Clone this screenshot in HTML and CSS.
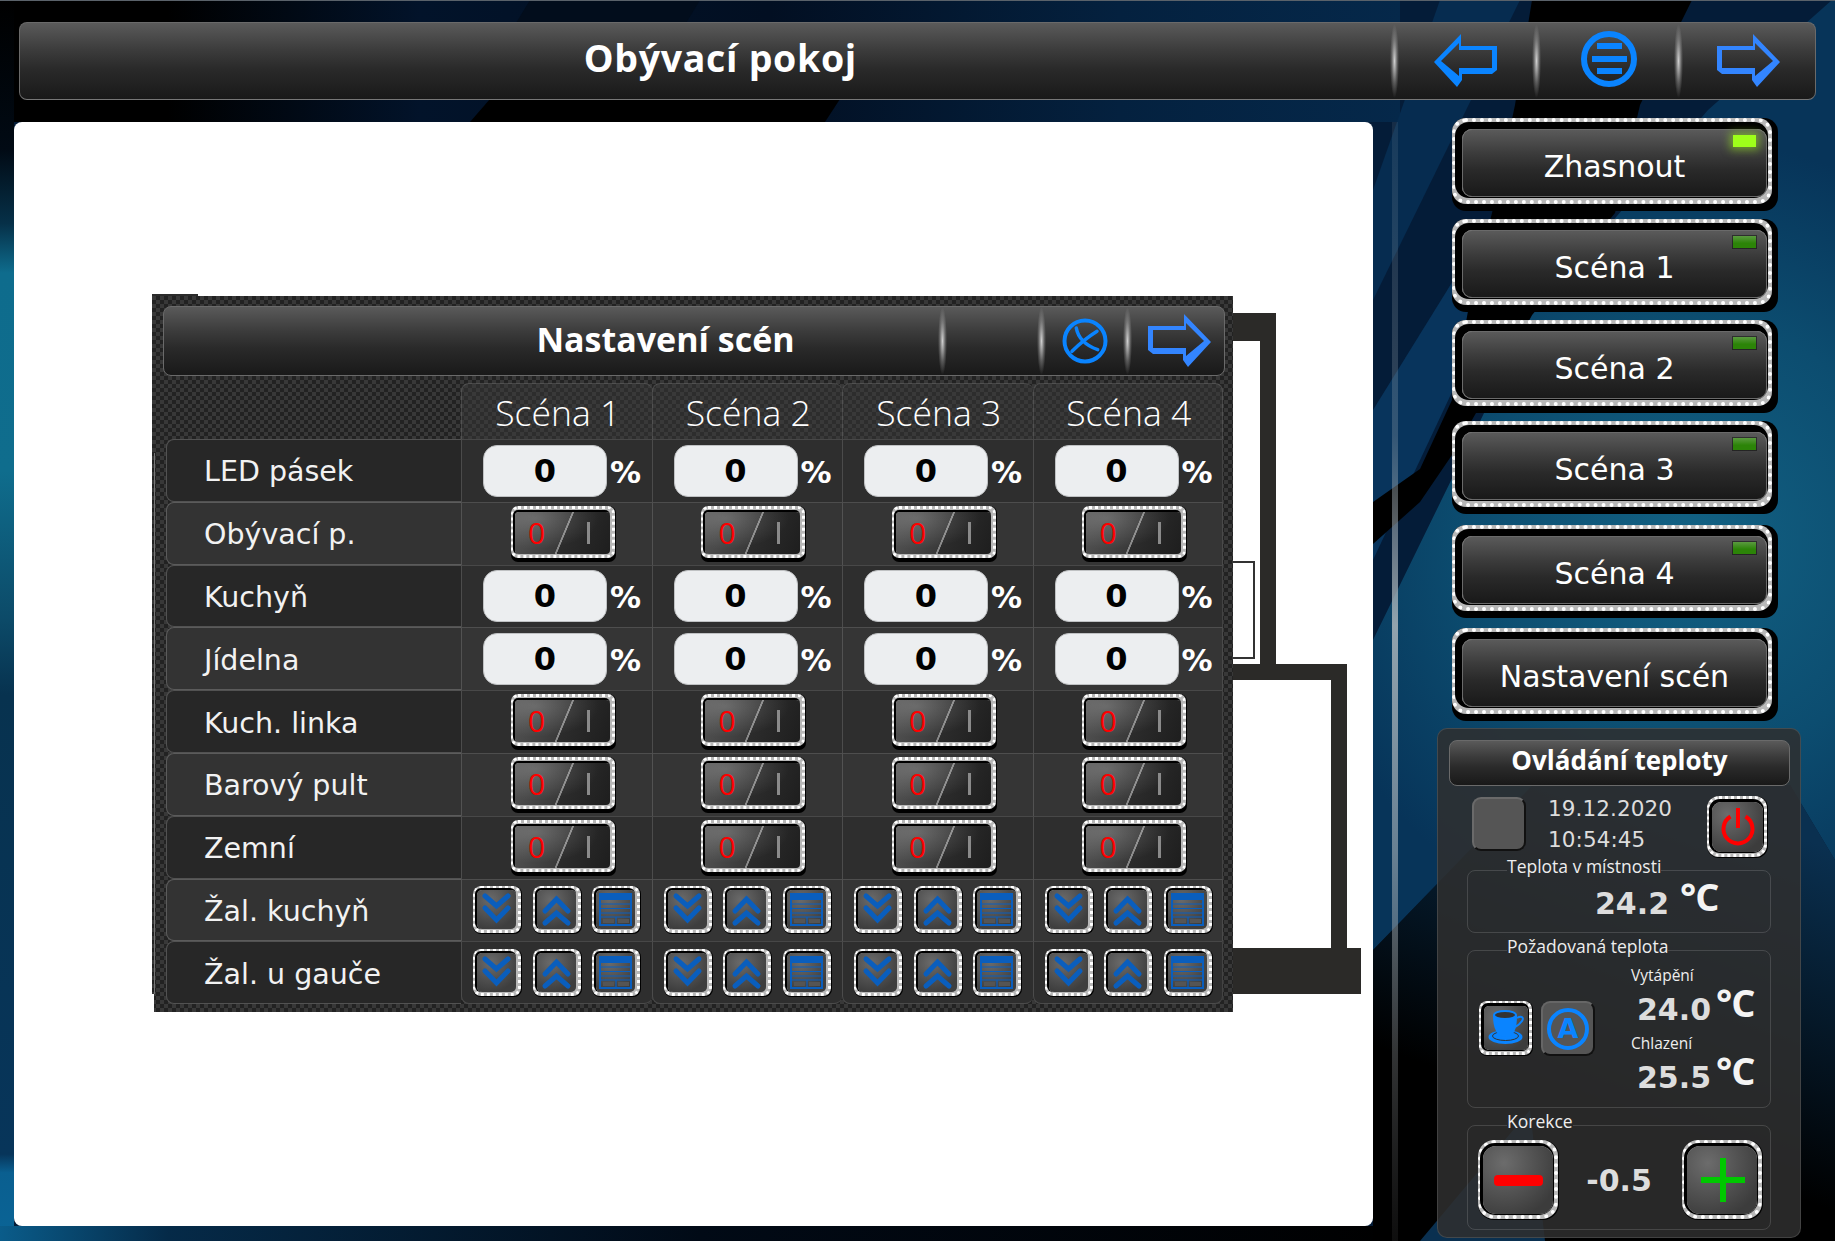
FILE: index.html
```html
<!DOCTYPE html>
<html lang="cs">
<head>
<meta charset="utf-8">
<title>Obývací pokoj</title>
<link rel="stylesheet" href="styles.css">
</head>
<body>
<svg class="bg" viewBox="0 0 1835 1241" aria-hidden="true">
  <defs>
    <linearGradient id="gTop" x1="0" y1="0" x2="1" y2="0">
      <stop offset="0" stop-color="#000"/><stop offset=".12" stop-color="#000"/><stop offset=".3" stop-color="#02132a"/><stop offset=".55" stop-color="#020f22"/><stop offset=".8" stop-color="#04213f"/><stop offset="1" stop-color="#05284a"/>
    </linearGradient>
    <linearGradient id="gLeft" x1="0" y1="0" x2="0" y2="1">
      <stop offset="0" stop-color="#000"/><stop offset=".12" stop-color="#010a14"/><stop offset=".18" stop-color="#063048"/><stop offset=".22" stop-color="#0e6c8d"/><stop offset=".38" stop-color="#0f6d8d"/><stop offset=".5" stop-color="#0c4a68"/><stop offset=".56" stop-color="#07324f"/><stop offset=".93" stop-color="#07355a"/><stop offset=".945" stop-color="#0a5f90"/><stop offset="1" stop-color="#0a6496"/>
    </linearGradient>
    <linearGradient id="gBot" x1="0" y1="0" x2="1" y2="0">
      <stop offset="0" stop-color="#0a5c8a"/><stop offset=".12" stop-color="#052a48"/><stop offset=".5" stop-color="#010a16"/><stop offset="1" stop-color="#000"/>
    </linearGradient>
    <radialGradient id="gTeal" gradientUnits="userSpaceOnUse" cx="1690" cy="540" r="400">
      <stop offset="0" stop-color="#126183"/><stop offset=".55" stop-color="#0c4d70"/><stop offset="1" stop-color="#073459"/>
    </radialGradient>
    <linearGradient id="gCorner" gradientUnits="userSpaceOnUse" x1="1835" y1="850" x2="1720" y2="1170">
      <stop offset="0" stop-color="#0a3050"/><stop offset="1" stop-color="#000"/>
    </linearGradient>
    <linearGradient id="gBeam" x1="0" y1="0" x2="0" y2="1">
      <stop offset="0" stop-color="#9aa6ae" stop-opacity=".12"/><stop offset=".28" stop-color="#9aa6ae" stop-opacity=".3"/><stop offset=".45" stop-color="#aab4ba" stop-opacity=".85"/><stop offset=".65" stop-color="#aab4ba" stop-opacity=".6"/><stop offset="1" stop-color="#777" stop-opacity=".12"/>
    </linearGradient>
  </defs>
  <rect width="1835" height="1241" fill="#041c38"/>
  <rect width="1400" height="122" fill="url(#gTop)"/>
  <polygon points="470,122 490,99 840,99 825,122" fill="#000"/>
  <polygon points="470,99 530,0 700,0 640,99" fill="#020d1c"/>
  <rect width="14" height="1241" fill="url(#gLeft)"/>
  <rect y="1226" width="1400" height="15" fill="url(#gBot)"/>
  <polygon points="1835,0 1835,860 1790,785 1533,785 1373,950 1373,640 1532,315 1708,110 1832,0" fill="url(#gTeal)"/>
  <polygon points="1440,0 1520,0 1373,300 1373,190" fill="#062c50"/>
  <polygon points="1373,410 1500,205 1540,205 1373,560" fill="#08345c"/>
  <polygon points="1532,0 1692,0 1640,105 1615,213 1532,315 1452,455 1420,502 1373,544 1373,502 1420,469 1452,400 1470,300 1492,213 1515,105" fill="#000"/>
  <polygon points="1373,950 1533,785 1790,785 1835,860 1835,1241 1373,1241" fill="url(#gCorner)"/>
  <polygon points="1420,1241 1530,1110 1545,1241" fill="#0a3050"/>
  <rect x="1392" y="122" width="6" height="1119" fill="url(#gBeam)"/>
  <rect y="0" width="1835" height="1" fill="#5a626a"/>
</svg>

<svg class="defs" aria-hidden="true">
  <symbol id="ic-arrow" viewBox="0 0 63 54"><path fill-rule="evenodd" d="M0 28 27 0v12h36v24l-5 4H28v6l-5 7zM7 27l18 15v-8h33V16H25V9z"/></symbol>
  <symbol id="ic-down" viewBox="0 0 39 39"><path d="M8 6l11.500 10L31 6M8 18l11.500 12L31 18"/></symbol>
  <symbol id="ic-up" viewBox="0 0 39 39"><path d="M8 33L19.500 23 31 33M8 21L19.500 9 31 21"/></symbol>
  <symbol id="ic-blind" viewBox="0 0 39 39"><rect class="solid" x="3" y="3" width="33" height="7"/><rect class="line" x="4" y="4" width="31" height="31"/><path class="thin" d="M5 14h29M5 18.500h29M5 23h29M4 27h31M20 27v8"/><rect class="grey" x="7" y="29" width="11" height="4"/><rect class="grey" x="22" y="29" width="11" height="4"/></symbol>
</svg>

<header class="topbar">
  <div class="title">Obývací pokoj</div>
  <span class="sep"></span>
  <div class="tool tool-a"><svg class="arrow blue-l"><use href="#ic-arrow"/></svg></div>
  <span class="sep"></span>
  <div class="tool tool-b">
    <svg class="menu" viewBox="0 0 56 56"><circle cx="28" cy="28" r="25"/><path d="M16 15h25M11 28h35M16 40h25"/></svg>
  </div>
  <span class="sep"></span>
  <div class="tool tool-c"><svg class="arrow blue-r flip"><use href="#ic-arrow"/></svg></div>
</header>

<div class="main">
  <section class="canvas">
    <svg class="plan" viewBox="14 122 1359 1104" aria-hidden="true">
      <rect x="1233" y="313" width="43" height="28"/>
      <rect x="1260" y="313" width="16" height="367"/>
      <rect x="1233" y="664" width="114" height="16"/>
      <rect x="1331" y="664" width="16" height="290"/>
      <rect x="1233" y="948" width="128" height="46"/>
      <path class="room" d="M1233 562h21v96h-21"/>
    </svg>

    <div class="dialog">
      <div class="dlg-head">
        <div class="dlg-title">Nastavení scén</div>
        <span class="sep sep-d"></span>
        <div class="dlg-gap"></div>
        <span class="sep sep-d"></span>
        <div class="dlg-x">
          <svg class="close" viewBox="0 0 46 46"><circle cx="23" cy="23" r="20.500"/><path d="M14.300 10Q17 25 35.700 31.700M35 13.300Q21.700 21.700 10 33.300"/></svg>
        </div>
        <span class="sep sep-d"></span>
        <div class="dlg-next"><svg class="arrow blue-r flip"><use href="#ic-arrow"/></svg></div>
      </div>
      <div class="sheet">
        <div class="corner"></div>
        <div class="head">Scéna 1</div><div class="head">Scéna 2</div><div class="head">Scéna 3</div><div class="head">Scéna 4</div>

        <div class="lab">LED pásek</div>
        <div class="cell"><div class="num">0</div><span class="pct">%</span></div>
        <div class="cell"><div class="num">0</div><span class="pct">%</span></div>
        <div class="cell"><div class="num">0</div><span class="pct">%</span></div>
        <div class="cell"><div class="num">0</div><span class="pct">%</span></div>

        <div class="lab">Obývací p.</div>
        <div class="cell"><div class="chrome toggle"><div class="face"><span class="off">0</span><span class="on"></span></div></div></div>
        <div class="cell"><div class="chrome toggle"><div class="face"><span class="off">0</span><span class="on"></span></div></div></div>
        <div class="cell"><div class="chrome toggle"><div class="face"><span class="off">0</span><span class="on"></span></div></div></div>
        <div class="cell"><div class="chrome toggle"><div class="face"><span class="off">0</span><span class="on"></span></div></div></div>

        <div class="lab">Kuchyň</div>
        <div class="cell"><div class="num">0</div><span class="pct">%</span></div>
        <div class="cell"><div class="num">0</div><span class="pct">%</span></div>
        <div class="cell"><div class="num">0</div><span class="pct">%</span></div>
        <div class="cell"><div class="num">0</div><span class="pct">%</span></div>

        <div class="lab">Jídelna</div>
        <div class="cell"><div class="num">0</div><span class="pct">%</span></div>
        <div class="cell"><div class="num">0</div><span class="pct">%</span></div>
        <div class="cell"><div class="num">0</div><span class="pct">%</span></div>
        <div class="cell"><div class="num">0</div><span class="pct">%</span></div>

        <div class="lab">Kuch. linka</div>
        <div class="cell"><div class="chrome toggle"><div class="face"><span class="off">0</span><span class="on"></span></div></div></div>
        <div class="cell"><div class="chrome toggle"><div class="face"><span class="off">0</span><span class="on"></span></div></div></div>
        <div class="cell"><div class="chrome toggle"><div class="face"><span class="off">0</span><span class="on"></span></div></div></div>
        <div class="cell"><div class="chrome toggle"><div class="face"><span class="off">0</span><span class="on"></span></div></div></div>

        <div class="lab">Barový pult</div>
        <div class="cell"><div class="chrome toggle"><div class="face"><span class="off">0</span><span class="on"></span></div></div></div>
        <div class="cell"><div class="chrome toggle"><div class="face"><span class="off">0</span><span class="on"></span></div></div></div>
        <div class="cell"><div class="chrome toggle"><div class="face"><span class="off">0</span><span class="on"></span></div></div></div>
        <div class="cell"><div class="chrome toggle"><div class="face"><span class="off">0</span><span class="on"></span></div></div></div>

        <div class="lab">Zemní</div>
        <div class="cell"><div class="chrome toggle"><div class="face"><span class="off">0</span><span class="on"></span></div></div></div>
        <div class="cell"><div class="chrome toggle"><div class="face"><span class="off">0</span><span class="on"></span></div></div></div>
        <div class="cell"><div class="chrome toggle"><div class="face"><span class="off">0</span><span class="on"></span></div></div></div>
        <div class="cell"><div class="chrome toggle"><div class="face"><span class="off">0</span><span class="on"></span></div></div></div>

        <div class="lab">Žal. kuchyň</div>
        <div class="cell trio"><div class="chrome mini"><div class="face"><svg><use href="#ic-down"/></svg></div></div><div class="chrome mini"><div class="face"><svg><use href="#ic-up"/></svg></div></div><div class="chrome mini"><div class="face"><svg><use href="#ic-blind"/></svg></div></div></div>
        <div class="cell trio"><div class="chrome mini"><div class="face"><svg><use href="#ic-down"/></svg></div></div><div class="chrome mini"><div class="face"><svg><use href="#ic-up"/></svg></div></div><div class="chrome mini"><div class="face"><svg><use href="#ic-blind"/></svg></div></div></div>
        <div class="cell trio"><div class="chrome mini"><div class="face"><svg><use href="#ic-down"/></svg></div></div><div class="chrome mini"><div class="face"><svg><use href="#ic-up"/></svg></div></div><div class="chrome mini"><div class="face"><svg><use href="#ic-blind"/></svg></div></div></div>
        <div class="cell trio"><div class="chrome mini"><div class="face"><svg><use href="#ic-down"/></svg></div></div><div class="chrome mini"><div class="face"><svg><use href="#ic-up"/></svg></div></div><div class="chrome mini"><div class="face"><svg><use href="#ic-blind"/></svg></div></div></div>

        <div class="lab">Žal. u gauče</div>
        <div class="cell trio"><div class="chrome mini"><div class="face"><svg><use href="#ic-down"/></svg></div></div><div class="chrome mini"><div class="face"><svg><use href="#ic-up"/></svg></div></div><div class="chrome mini"><div class="face"><svg><use href="#ic-blind"/></svg></div></div></div>
        <div class="cell trio"><div class="chrome mini"><div class="face"><svg><use href="#ic-down"/></svg></div></div><div class="chrome mini"><div class="face"><svg><use href="#ic-up"/></svg></div></div><div class="chrome mini"><div class="face"><svg><use href="#ic-blind"/></svg></div></div></div>
        <div class="cell trio"><div class="chrome mini"><div class="face"><svg><use href="#ic-down"/></svg></div></div><div class="chrome mini"><div class="face"><svg><use href="#ic-up"/></svg></div></div><div class="chrome mini"><div class="face"><svg><use href="#ic-blind"/></svg></div></div></div>
        <div class="cell trio"><div class="chrome mini"><div class="face"><svg><use href="#ic-down"/></svg></div></div><div class="chrome mini"><div class="face"><svg><use href="#ic-up"/></svg></div></div><div class="chrome mini"><div class="face"><svg><use href="#ic-blind"/></svg></div></div></div>
      </div>
    </div>
  </section>

  <aside class="side">
    <div class="chrome scene"><div class="face">Zhasnout</div><span class="led led-on"></span></div>
    <div class="chrome scene"><div class="face">Scéna 1</div><span class="led"></span></div>
    <div class="chrome scene"><div class="face">Scéna 2</div><span class="led"></span></div>
    <div class="chrome scene"><div class="face">Scéna 3</div><span class="led"></span></div>
    <div class="chrome scene scene-gap"><div class="face">Scéna 4</div><span class="led"></span></div>
    <div class="chrome scene scene-gap scene-last"><div class="face">Nastavení scén</div></div>

    <div class="temp">
      <div class="temp-title">Ovládání teploty</div>
      <div class="clock-row">
        <div class="blank"></div>
        <div class="clock"><div>19.12.2020</div><div>10:54:45</div></div>
        <div class="chrome power"><div class="face">
          <svg viewBox="0 0 38 40"><path d="M11.500 9.500a14.500 14.500 0 1 0 15 0"/><path d="M19 1v20"/></svg>
        </div></div>
      </div>
      <fieldset class="box box-room">
        <legend>Teplota v místnosti</legend>
        <div class="reading"><span class="val">24.2</span><span class="deg deg-wide">°C</span></div>
      </fieldset>
      <fieldset class="box box-set">
        <legend>Požadovaná teplota</legend>
        <div class="set-row">
          <div class="modes">
            <div class="chrome cup"><div class="face">
              <svg viewBox="0 0 44 44"><ellipse class="saucer" cx="21.500" cy="31" rx="17" ry="7"/><ellipse class="saucer-in" cx="21.500" cy="30" rx="13" ry="4.500"/><path class="body" d="M9 9c0 12 3 22 12.500 22S33 21 33 9z"/><ellipse class="rim" cx="21" cy="9" rx="11" ry="4"/><path class="handle" d="M33 12c5-3 7 0 5 3s-5 5-7 6"/></svg>
            </div></div>
            <div class="auto">
              <svg viewBox="0 0 46 46"><circle cx="23" cy="23" r="19"/><text x="23" y="32" text-anchor="middle">A</text></svg>
            </div>
          </div>
          <div class="setpoints">
            <div class="cap">Vytápění</div>
            <div class="reading r1"><span class="val">24.0</span><span class="deg">°C</span></div>
            <div class="cap cap2">Chlazení</div>
            <div class="reading r2"><span class="val">25.5</span><span class="deg">°C</span></div>
          </div>
        </div>
      </fieldset>
      <fieldset class="box box-fix">
        <legend>Korekce</legend>
        <div class="fix-row">
          <div class="chrome big"><div class="face"><span class="minus"></span></div></div>
          <div class="fix-val">-0.5</div>
          <div class="chrome big"><div class="face"><span class="plus"></span></div></div>
        </div>
      </fieldset>
    </div>
  </aside>
</div>
</body>
</html>
```
FILE: styles.css
```css
*{box-sizing:border-box}
html,body{margin:0;padding:0}
body{width:1835px;height:1241px;position:relative;overflow:hidden;background:#041c38;font-family:"DejaVu Sans",sans-serif;color:#fff}
.bg{position:absolute;left:0;top:0;z-index:-1;width:1835px;height:1241px}
.defs{position:absolute;width:0;height:0}

.topbar,.dlg-head,.temp-title,.scene .face{background:linear-gradient(#5a5a5a 0,#3c3c3c 35%,#2a2a2a 60%,#191919 100%);border:1px solid #6a6a6a}
.topbar{position:relative;display:flex;align-items:center;width:1797px;height:78px;margin:22px 0 0 19px;border-radius:8px;border-bottom-color:#777}
.title{width:1373px;padding:0 0 6px 30px;text-align:center;font:700 37.5px/1 "Open Sans",sans-serif;letter-spacing:.7px}
.sep{flex:none;width:9px;height:74px;margin:0 -1px;background:radial-gradient(ellipse closest-side,rgba(225,225,225,.9),rgba(215,215,215,.3) 60%,transparent)}
.tool{display:flex;justify-content:center;align-items:center;height:100%}
.tool-a{width:136px}
.tool-b{width:135px}
.tool-c{width:133px}
.arrow{display:block;width:63px;height:54px}
.blue-l{fill:#0a84ff}
.blue-r{fill:#3385ff}
.flip{transform:scaleX(-1)}
.menu{display:block;width:56px;height:56px;margin:0 0 4px 3px;fill:none;stroke:#0a84ff}
.menu circle{stroke-width:6}
.menu path{stroke-width:6}

.main{display:flex;align-items:flex-start;margin-top:22px}
.canvas{position:relative;flex:none;width:1359px;height:1104px;margin-left:14px;background:#fff;border-radius:8px}
.plan{position:absolute;left:0;top:0;width:1359px;height:1104px;fill:#2b2a28}
.plan .room{fill:none;stroke:#333;stroke-width:2}

.dialog{position:absolute;left:138px;top:174px;width:1081px;height:716px;padding:10px 8px 0 11px;background-color:#2b2b2b;background-image:conic-gradient(#222 25%,#383838 0 50%,#222 0 75%,#383838 0);background-size:8px 8px;clip-path:polygon(0 -2px,46px -2px,46px 0,100% 0,100% 100%,2px 100%,2px 698px,0 698px)}
.dialog::before{content:"";position:absolute;left:0;top:-2px;width:46px;height:2px;background:#2b2b2b}
.dialog::after{content:"";position:absolute;left:2px;top:157px;width:1px;height:541px;background:#777}
.dlg-head{display:flex;align-items:center;width:1062px;height:70px;border-radius:8px}
.dlg-title{width:775px;padding:0 0 4px 228px;text-align:center;font:700 34px/1 "Open Sans",sans-serif;white-space:nowrap}
.sep-d{height:68px}
.dlg-gap{width:92px}
.dlg-x{display:flex;justify-content:center;width:79px}
.close{display:block;width:46px;height:46px;fill:none;stroke:#0a84ff}
.close circle{stroke-width:4}
.close path{stroke-width:3.5;stroke-linecap:round}
.dlg-next{display:flex;justify-content:center;width:88px;padding-left:8px}

.sheet{display:grid;grid-template-columns:295px repeat(4,190.5px);grid-template-rows:56px repeat(9,62.8px);margin:7px 0 0 3px}
.head{display:flex;align-items:center;justify-content:center;padding:2px 0 0 2px;background:rgba(60,60,60,.45);border:1px solid rgba(255,255,255,.12);border-bottom:0;border-right:0;border-radius:8px 8px 0 0;font:300 35.5px/1 "Open Sans",sans-serif;color:#fff}
.head:nth-child(5){border-right:1px solid rgba(255,255,255,.12)}
.lab{display:flex;align-items:center;padding-left:37px;padding-top:3px;font-size:28.5px;color:#f2f2f2;background:#272727;border:1px solid rgba(255,255,255,.2);border-right:0;border-radius:8px 0 0 8px}
.lab:nth-child(10n+11){background:#333}
.cell{display:flex;align-items:center;padding-left:21px;background:#2e2e2e;border-left:1px solid rgba(255,255,255,.14);border-top:1px solid rgba(255,255,255,.12)}
.sheet>:nth-child(10n+12),.sheet>:nth-child(10n+13),.sheet>:nth-child(10n+14),.sheet>:nth-child(10n+15){background:#353535}
.sheet>.cell:nth-child(5n+10){border-right:1px solid rgba(255,255,255,.1)}
.sheet>.cell:nth-last-child(-n+4){border-bottom:1px solid rgba(255,255,255,.14);border-radius:0 0 8px 8px}
.num{display:flex;align-items:center;justify-content:center;width:124px;height:52px;background:#eceef0;border:1px solid #bfc1c3;border-radius:14px;font-weight:700;font-size:32px;color:#000}
.pct{margin:3px 0 0 3px;font-weight:700;font-size:31px;line-height:1}

.chrome{position:relative;flex:none;background:#000;border-radius:var(--rad)}
.chrome::before{content:"";position:absolute;left:0;top:0;right:var(--off-r);bottom:var(--off-b);background:#b8b8b8;border:var(--ring) dotted #fff;border-radius:var(--rad)}
.chrome>.face{position:relative;border-radius:calc(var(--rad) - 3px);box-shadow:-1px -1px 0 2px #000}

.scene{--rad:14px;--off-r:6px;--off-b:7px;--ring:4px;width:326px;height:93px;padding:11px 0 0 10px;margin-bottom:8px}
.scene .face{display:flex;align-items:center;justify-content:center;width:305px;height:68px;padding-top:6px;font-size:30px;border-radius:10px;color:#fff;box-shadow:-3px -3px 0 4px #000}
.scene-gap{margin-top:3px}
.scene-last{margin-bottom:0;margin-top:2px}
.led{position:absolute;left:281px;top:17px;width:23px;height:12px;background:linear-gradient(#5b9a40,#2c8408 60%);outline:1px solid rgba(0,0,0,.45)}
.led-on{background:#9eff1a;outline:0;box-shadow:0 0 9px 3px rgba(150,230,30,.55)}

.toggle{--rad:7px;--off-r:1px;--off-b:4px;--ring:3px;width:105px;height:56px;padding:6px 0 0 4px;margin-left:27.500px}
.toggle .face{display:flex;align-items:center;width:95px;height:42px;background:radial-gradient(ellipse at 22% 15%,rgba(255,255,255,.18),transparent 60%),linear-gradient(112.7deg,#565656 0,#3a3a3a 50.500%,#8a8a8a 51%,#8a8a8a 52.300%,#2c2c2c 52.800%,#1e1e1e 100%);border-radius:4px;box-shadow:-1px -1px 0 1px #000}
.off{width:44px;text-align:center;font:400 30px/1 "Open Sans",sans-serif;color:#f00}
.on{width:3px;height:22px;margin-left:28px;background:#8a8a8a}

.trio{padding-left:11px;gap:10.500px}
.mini{--rad:8px;--off-r:1px;--off-b:1px;--ring:3px;width:49px;height:48px;padding:4px 0 0 4px}
.mini .face{width:39px;height:39px;background:radial-gradient(circle at 35% 25%,#6a6a6a,#3e3e3e 75%);box-shadow:-1px -1px 0 1px #000}
.mini svg{display:block;width:39px;height:39px;fill:none;stroke:#0a5ebd;stroke-width:5;stroke-linecap:round}
.solid{fill:#0a5ebd;stroke:none}
.line{stroke-width:2;stroke-linecap:butt}
.thin{stroke-width:1.2;stroke-linecap:butt}
.grey{fill:#555;stroke:none}

.side{display:flex;flex-direction:column;align-items:flex-start;margin:-4px 0 0 79px}
.temp{display:flex;flex-direction:column;flex:none;width:364px;height:510px;margin:7px 0 0 -15px;padding:11px 0 0 11px;background:rgba(46,46,46,.86);border:1px solid rgba(255,255,255,.12);border-radius:10px}
.temp-title{display:flex;align-items:center;justify-content:center;flex:none;width:341px;height:46px;padding-bottom:6px;border-radius:8px;font:700 26px/1 "Open Sans",sans-serif}
.clock-row{display:flex;align-items:flex-start;flex:none;height:58px;margin:10px 0 0 23px}
.blank{width:54px;height:54px;margin-top:1px;background:#555;border:2px solid #6a6a6a;border-right-color:#111;border-bottom-color:#111;border-radius:9px}
.clock{width:159px;margin:-3px 0 0 22px;font-size:21.5px;line-height:31px;color:#ddd;letter-spacing:.1px}
.power{--rad:12px;--off-r:1px;--off-b:1px;--ring:3px;width:61px;height:62px;padding:6px 0 0 5px;margin-left:0}
.power .face,.cup .face,.big .face{display:flex;align-items:center;justify-content:center;background:radial-gradient(circle at 30% 25%,#6c6c6c,#3c3c3c 80%)}
.power .face{width:51px;height:50px}
.power svg{width:38px;height:40px;fill:none;stroke:#f00;stroke-width:4}

.box{position:relative;flex:none;display:block;width:304px;margin:0 0 1px 18px;padding:0;border:1px solid rgba(255,255,255,.14);border-radius:8px;min-inline-size:0}
.box legend{margin-left:39px;padding:0 0 8px;font:400 17.5px/24px "Open Sans",sans-serif;color:#eee}
.box-room{height:79px}
.box-set{height:174px}
.box-fix{height:121px}
.reading{display:flex;align-items:flex-start}
.box-room .reading{margin-top:-3px;padding:0 0 0 127px}
.val{font-weight:700;font-size:30px;line-height:42px;color:#ddd}
.deg{margin:-13px 0 0 5px;font:700 38px/52px "Open Sans",sans-serif;color:#f4f4f4;letter-spacing:-1px}
.deg-wide{margin-left:11px}
.set-row{display:flex;align-items:flex-start}
.modes{display:flex;gap:8px;margin:35px 0 0 11px}
.cup{--rad:8px;--off-r:1px;--off-b:1px;--ring:3px;width:54px;height:55px;padding:5px 0 0 5px}
.cup .face{width:44px;height:44px}
.cup svg{width:44px;height:44px}
.saucer{fill:#0a84ff}
.saucer-in{fill:none;stroke:#333;stroke-width:1}
.body{fill:#0a84ff}
.rim{fill:#333;stroke:#0a84ff;stroke-width:2}
.handle{fill:none;stroke:#0a84ff;stroke-width:2}
.auto{display:flex;align-items:center;justify-content:center;width:54px;height:55px;background:#555;border:2px solid #666;border-right-color:#111;border-bottom-color:#111;border-radius:9px}
.auto svg{width:46px;height:46px;fill:none;stroke:#0a84ff;stroke-width:4}
.auto text{font:700 27px "DejaVu Sans",sans-serif;fill:#0a84ff;stroke:none}
.setpoints{margin:-2px 0 0 36px}
.cap{font:400 15.500px/22px "Open Sans",sans-serif;color:#eee}
.r1,.r2{margin:3px 0 0 6px}
.cap2{margin-top:1px}
.r2{margin-top:3px}
.fix-row{display:flex;align-items:center;margin-top:-1px;padding-left:10px}
.big{--rad:16px;--off-r:1px;--off-b:1px;--ring:4px;width:81px;height:80px;padding:6px 0 0 5px}
.big .face{width:70px;height:68px}
.fix-val{width:123px;text-align:center;padding-right:3px;font-weight:700;font-size:30px;color:#ddd}
.minus{width:49px;height:11px;background:#f00;border-radius:4px}
.plus{width:44px;height:44px;margin-left:2px;border-radius:3px;background:linear-gradient(#00c800,#00c800) center/100% 6px no-repeat,linear-gradient(#00c800,#00c800) center/6px 100% no-repeat}
```
